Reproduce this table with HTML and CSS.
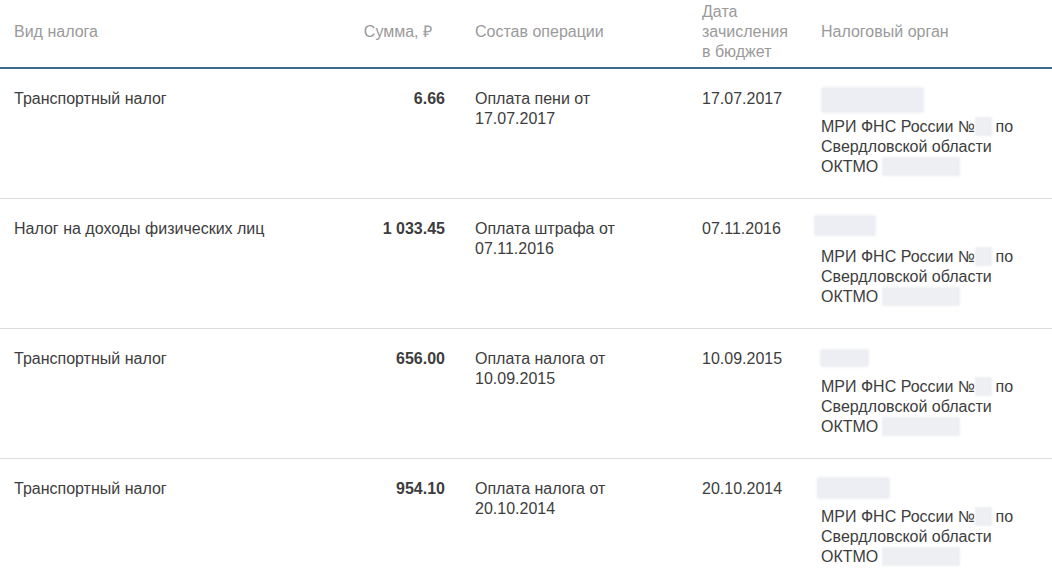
FILE: index.html
```html
<!DOCTYPE html>
<html lang="ru">
<head>
    <meta charset="UTF-8" />
    <title>Платежи по налогам</title>
    <link rel="stylesheet" href="styles.css">
</head>
<body>
    <table class="payments">
        <colgroup>
            <col class="col-type">
            <col class="col-sum">
            <col class="col-op">
            <col class="col-date">
            <col class="col-org">
        </colgroup>
        <thead>
            <tr>
                <th>Вид налога</th>
                <th class="sum">Сумма, ₽</th>
                <th>Состав операции</th>
                <th>Дата зачисления в&nbsp;бюджет</th>
                <th>Налоговый орган</th>
            </tr>
        </thead>
        <tbody>
            <tr>
                <td>Транспортный налог</td>
                <td class="sum">6.66</td>
                <td>Оплата пени от 17.07.2017</td>
                <td>17.07.2017</td>
                <td class="org">
                    <div class="hidden-line line-a"></div>
                    МРИ ФНС России №<span class="hidden-num"></span> по Свердловской области ОКТМО <span class="hidden-code"></span>
                </td>
            </tr>
            <tr>
                <td>Налог на доходы физических лиц</td>
                <td class="sum">1 033.45</td>
                <td>Оплата штрафа от 07.11.2016</td>
                <td>07.11.2016</td>
                <td class="org">
                    <div class="hidden-line line-b"></div>
                    МРИ ФНС России №<span class="hidden-num"></span> по Свердловской области ОКТМО <span class="hidden-code"></span>
                </td>
            </tr>
            <tr>
                <td>Транспортный налог</td>
                <td class="sum">656.00</td>
                <td>Оплата налога от 10.09.2015</td>
                <td>10.09.2015</td>
                <td class="org">
                    <div class="hidden-line line-c"></div>
                    МРИ ФНС России №<span class="hidden-num"></span> по Свердловской области ОКТМО <span class="hidden-code"></span>
                </td>
            </tr>
            <tr>
                <td>Транспортный налог</td>
                <td class="sum">954.10</td>
                <td>Оплата налога от 20.10.2014</td>
                <td>20.10.2014</td>
                <td class="org">
                    <div class="hidden-line line-d"></div>
                    МРИ ФНС России №<span class="hidden-num"></span> по Свердловской области ОКТМО <span class="hidden-code"></span>
                </td>
            </tr>
        </tbody>
    </table>
</body>
</html>
```

FILE: styles.css
```css
body {
    font-family: "Liberation Sans", Arial, sans-serif;
    font-size: 16px;
    line-height: 20px;
    color: #3d3d3d;
    background-color: #fff;
    margin: 0;
}

.payments {
    width: 100%;
    border-collapse: collapse;
    table-layout: fixed;
}

.col-type { width: 340px; }
.col-sum { width: 121px; }
.col-op { width: 227px; }
.col-date { width: 119px; }

.payments th {
    font-weight: normal;
    color: #9a9a9a;
    text-align: left;
    vertical-align: middle;
    padding: 2px 14px 5px;
    height: 60px;
    border-bottom: 2px solid #3c6a8b;
}

.payments th.sum {
    text-align: right;
    padding-right: 29px;
}

.payments td {
    vertical-align: top;
    padding: 20px 14px 0;
    height: 109px;
    border-bottom: 1px solid #dcdcdc;
}

.payments td.sum {
    text-align: right;
    font-weight: bold;
    padding-right: 16px;
}

/* скрытые данные налогового органа */
.hidden-line {
    background-color: #eceef3;
    border-radius: 2px;
    box-shadow: 0 0 3px 1px #eceef3;
}

.line-a { width: 101px; height: 24px; margin: -1px 0 5px 1px; }
.line-b { width: 60px; height: 19px; margin: -3px 0 12px -6px; }
.line-c { width: 47px; height: 16px; margin: 1px 0 11px 0; }
.line-d { width: 71px; height: 20px; margin: -1px 0 9px -3px; }

.hidden-num,
.hidden-code {
    display: inline-block;
    vertical-align: -3px;
    height: 17px;
    background-color: #eeeff2;
    box-shadow: 0 0 2px 1px #eeeff2;
}

.hidden-num { width: 15px; margin-left: 1px; }
.hidden-code { width: 76px; }
```
